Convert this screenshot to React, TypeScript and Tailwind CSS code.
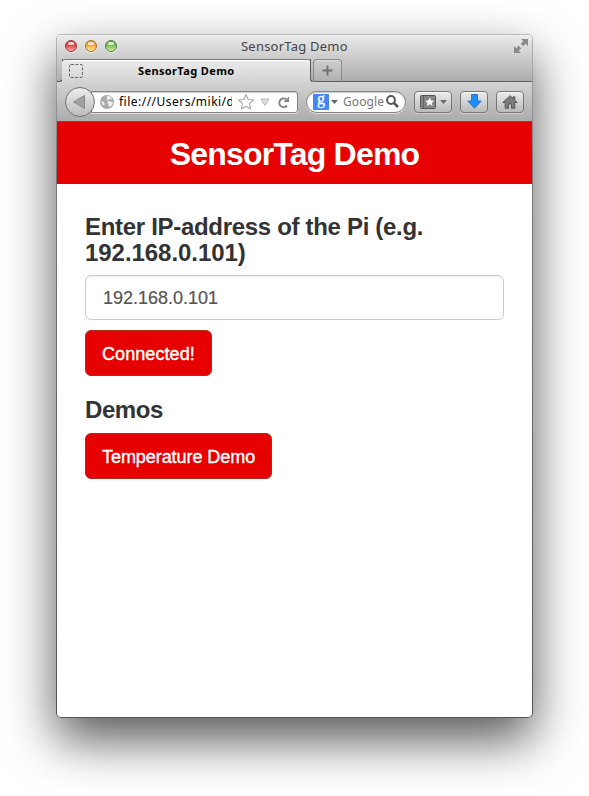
import React from "react";

const ui = "font-['Noto_Sans','Open_Sans',sans-serif]";
const page = "font-['Liberation_Sans',Arial,sans-serif]";

function Light({ tone }: { tone: string }) {
  return (
    <span
      className={`flex h-3 w-3 justify-center rounded-full border shadow-[0_1px_0_rgba(255,255,255,.6)] ${tone}`}
    >
      <span className="mt-px h-[3px] w-[6px] rounded-full bg-white/75" />
    </span>
  );
}

function TitleBar() {
  return (
    <div className="relative flex h-6 items-center justify-between pb-[2px] pl-[8px] pr-[4px]">
      <div className="flex gap-2">
        <Light tone="border-[#9b3a3c] bg-linear-to-b from-[#c93a40] via-[#e8484c] to-[#ffb0a8]" />
        <Light tone="border-[#a8742c] bg-linear-to-b from-[#dc8f2c] via-[#f3b046] to-[#ffec9a]" />
        <Light tone="border-[#54833c] bg-linear-to-b from-[#5f9d48] via-[#80c261] to-[#d2f5a8]" />
      </div>
      <span className={`absolute left-[184px] top-[1px] whitespace-nowrap text-[13px] leading-5 tracking-[0.22px] text-[#454545] ${ui}`}>
        SensorTag Demo
      </span>
      <svg width="14" height="14" viewBox="0 0 14 14" fill="#8a8a8a">
        <path d="M7 0h7v7l-2.300-2.300-2.500 2.500L6.800 4.800l2.500-2.500zM0 7l2.300 2.300 2.500-2.500 2.400 2.400-2.500 2.500L7 14H0z" />
      </svg>
    </div>
  );
}

function TabStrip() {
  return (
    <div className="flex h-[23px]">
      <div className="h-[23px] w-[6px] rounded-br-[4px] border-b border-r border-[#5c5c5c]" />
      <div className="-ml-px flex h-[23px] w-[249px] items-center rounded-t-[4px] border-t border-[#777] bg-linear-to-b from-[#ebebeb] to-[#d4d4d4] pl-[7px] shadow-[inset_0_1px_0_#fff]">
        <svg width="14" height="14" viewBox="0 0 14 14" fill="none" stroke="#666" strokeDasharray="3 1.5">
          <rect x=".5" y=".5" width="13" height="13" rx="1.500" />
        </svg>
        <span className={`ml-[55px] whitespace-nowrap text-[11px] font-bold leading-4 tracking-[0.38px] text-black ${ui}`}>
          SensorTag Demo
        </span>
      </div>
      <div className="-ml-px w-[3px] rounded-bl-[4px] border-b border-l border-[#5c5c5c]" />
      <div className="flex h-[23px] w-[29px] items-center justify-center rounded-t-[4px] rounded-bl-[3px] border border-[#8a8a8a] border-b-[#5c5c5c] bg-linear-to-b from-[#cfcfcf] to-[#b0b0b0] shadow-[inset_0_1px_0_#ddd]">
        <svg width="11" height="11" viewBox="0 0 11 11" stroke="#707070" strokeWidth="1.800">
          <path d="M5.500 .5v10M.5 5.500h10" />
        </svg>
      </div>
      <div className="flex-1 border-b border-[#5c5c5c]" />
    </div>
  );
}

const toolButton =
  "flex h-[22px] items-center justify-center rounded-[4px] border border-[#777] bg-linear-to-b from-[#ececec] to-[#bababa] shadow-[inset_0_1px_0_#f7f7f7,0_1px_0_#d0d0d0]";

function NavBar() {
  return (
    <div className="flex h-10 items-center border-b border-[#555] bg-linear-to-b from-[#d3d3d3] to-[#acacac] pl-[8px] pr-[8px]">
      <div className="relative z-10 flex h-[30px] w-[30px] shrink-0 items-center justify-center rounded-full border border-[#707070] bg-linear-to-b from-[#eeeeee] to-[#bcbcbc]">
        <svg width="12" height="14" viewBox="0 0 12 14" className="mr-[3px]">
          <path d="M11.500 .5v13L.5 7z" fill="#a2a2a2" stroke="#8a8a8a" />
        </svg>
      </div>
      <div className="-ml-[4px] flex h-[22px] w-[207px] shrink-0 items-center rounded-r-[3px] border border-[#858585] bg-white pl-[8px] shadow-[inset_0_1px_1px_#ccc,0_1px_0_#ddd]">
        <svg width="14" height="14" viewBox="0 0 14 14" className="shrink-0">
          <circle cx="7" cy="7" r="7" fill="#aaaaaa" />
          <path d="M6.500 1.200L9 .8l3.200 2.400-1.400 1.300-1.600-.6-.8 1.300-1.800-.8.600-1.600zM7.200 6.800l2.200-.8 3.600 1.500-.8 2.600-2.400 2-1.500-1.300.4-1.800-1.500-.8zM1.200 6l2.200.8 1.400 2-.4 1.600-2-.8z" fill="#eeeeee" />
        </svg>
        <span className={`ml-[5px] mt-px w-[113px] shrink-0 overflow-hidden whitespace-nowrap text-[12px] leading-[18px] tracking-[0.48px] text-black ${ui}`}>
          file:///Users/miki/d
        </span>
        <svg width="18" height="18" viewBox="0 0 18 18" fill="#fff" stroke="#a8a8a8" strokeWidth="1.100" strokeLinejoin="round" className="ml-[5px] shrink-0">
          <path d="M9 1.500l2.200 5 5.300.500-4 3.600 1.200 5.400L9 13.200 4.300 16l1.200-5.400L1.500 7l5.300-.5z" />
        </svg>
        <svg width="10" height="9" viewBox="0 0 10 9" className="ml-[5px] mt-px shrink-0">
          <path d="M1 1h8L5 7.500z" fill="#ddd" stroke="#b9b9b9" />
        </svg>
        <svg width="13" height="13" viewBox="0 0 13 13" className="ml-[7px] mt-px shrink-0">
          <path d="M10 9.500A4.300 4.300 0 1 1 9 3.200" fill="none" stroke="#858585" strokeWidth="2" />
          <path d="M12 .5V6H6.500z" fill="#858585" />
        </svg>
      </div>
      <div className="ml-[8px] flex h-[22px] w-[100px] shrink-0 items-center rounded-full border border-[#858585] bg-white pl-[6px] shadow-[inset_0_1px_1px_#ccc,0_1px_0_#ddd]">
        <span className="flex h-4 w-4 shrink-0 items-center justify-center bg-[#4387f5] font-['Liberation_Serif',serif] text-[16px] leading-4 text-white">
          <span className="-mt-[5px] block h-4 leading-4 [-webkit-text-stroke:0.3px_white]">g</span>
        </span>
        <svg width="7" height="4" viewBox="0 0 7 4" className="ml-[2px] shrink-0">
          <path d="M0 0h7L3.500 4z" fill="#666" />
        </svg>
        <span className={`ml-[5px] mt-px w-[41px] whitespace-nowrap text-[12px] leading-[18px] tracking-[0.1px] text-[#777] ${ui}`}>Google</span>
        <svg width="13" height="13" viewBox="0 0 13 13" fill="none" stroke="#555" className="ml-[2px] shrink-0">
          <circle cx="5" cy="5" r="3.900" strokeWidth="2" />
          <path d="M8 8l4 4" strokeWidth="2.500" />
        </svg>
      </div>
      <div className={`ml-[8px] w-[38px] shrink-0 gap-[4px] ${toolButton}`}>
        <svg width="16" height="14" viewBox="0 0 16 14">
          <rect x=".5" y=".5" width="15" height="13" rx="1" fill="#858585" stroke="#555" />
          <path d="M3.500 1v12" stroke="#606060" />
          <path d="M9.700 2l1.500 3.200 3.500.4-2.600 2.300.7 3.500-3.100-1.800-3.100 1.800.7-3.500-2.600-2.300 3.500-.4z" fill="#fff" stroke="#555" strokeWidth=".3" />
        </svg>
        <svg width="7" height="4" viewBox="0 0 7 4">
          <path d="M0 0h7L3.500 4z" fill="#6c6c6c" />
        </svg>
      </div>
      <div className={`ml-[8px] w-[28px] shrink-0 ${toolButton}`}>
        <svg width="15" height="15" viewBox="0 0 15 15">
          <path d="M4.500 .5h6v6.500h3.700L7.500 14.200.8 7h3.700z" fill="#1c8dfb" stroke="#1768bd" strokeWidth=".8" />
        </svg>
      </div>
      <div className={`ml-[8px] w-[28px] shrink-0 ${toolButton}`}>
        <svg width="16" height="14" viewBox="0 0 16 14" fill="#7c7c7c" stroke="#515151" strokeWidth=".9">
          <path d="M8 .7L.8 7.500h2.400v5.800h3.300V9h3v4.300h3.300V7.500h2.400l-2.400-2.300V1.800h-1.600v1.800z" />
        </svg>
      </div>
    </div>
  );
}

const redButton =
  "block h-[46px] rounded-[6px] border border-[#b3291f] bg-[#e60000] pl-4 pt-[2px] text-left text-[18px] leading-[24px] whitespace-nowrap text-white [-webkit-text-stroke:0.4px_white]";

export default function App() {
  return (
    <div className="h-[796px] w-[589px] overflow-hidden bg-white pl-[56px] pt-[34px]">
      <div className="h-[684px] w-[477px] rounded-[5px] bg-linear-to-b from-[#b5b5b5] via-[#777] via-20% to-[#555] p-px shadow-[0_22px_50px_rgba(0,0,0,.66)]">
        <div className="h-full overflow-hidden rounded-[4px] bg-white">
          <div className="bg-linear-to-b from-[#ebebeb] to-[#acacac] shadow-[inset_0_1px_0_#f5f5f5]">
            <TitleBar />
            <TabStrip />
          </div>
          <NavBar />
          <div className={page}>
            <header className="flex h-[62px] items-center justify-center bg-[#e60000]">
              <h1 className="mt-[2px] whitespace-nowrap text-[32px] font-bold leading-9 tracking-[-0.8px] text-white">SensorTag Demo</h1>
            </header>
            <main className="px-[28px] pt-[30px]">
              <h3 className="whitespace-nowrap text-[24px] font-bold leading-[26.4px] text-[#333]">
                <span className="block tracking-[-0.31px]">Enter IP-address of the Pi (e.g.</span>
                <span className="block tracking-[-0.05px]">192.168.0.101)</span>
              </h3>
              <input
                readOnly
                value="192.168.0.101"
                className="mt-[8px] block h-[45px] w-full rounded-[6px] border border-[#ccc] px-[17px] pt-[2px] text-[18px] text-[#555] shadow-[inset_0_1px_1px_rgba(0,0,0,.075)] outline-none [-webkit-text-stroke:0.2px_#555]"
              />
              <button className={`mt-[10px] w-[127px] tracking-[0.08px] ${redButton}`}>Connected!</button>
              <h3 className="mt-[21px] text-[24px] font-bold leading-[26.4px] tracking-[-0.45px] text-[#333]">Demos</h3>
              <button className={`mt-[10px] w-[187px] tracking-[-0.06px] ${redButton}`}>Temperature Demo</button>
            </main>
          </div>
        </div>
      </div>
    </div>
  );
}
